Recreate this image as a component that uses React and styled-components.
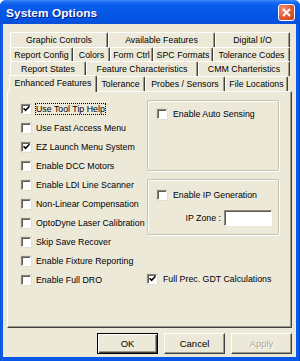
import React from "react";
import styled, { createGlobalStyle } from "styled-components";

const Global = createGlobalStyle`
  html, body {
    margin: 0;
    padding: 0;
    background: #ffffff;
  }
  * {
    box-sizing: border-box;
  }
`;

const FACE = "#ECE9D8";

const Window = styled.div`
  width: 300px;
  height: 361px;
  display: flex;
  flex-direction: column;
  background: linear-gradient(to right, #0842C8 0, #1763F0 1px, #0856E8 3px, #0856E8 296px, #1461F0 298px, #0036B6 300px);
  border-radius: 6px 6px 0 0;
  font-family: "Liberation Sans", Arial, sans-serif;
  font-size: 8.8px;
  color: #000;
  overflow: hidden;
`;

const TitleBar = styled.div`
  height: 24px;
  flex: none;
  display: flex;
  align-items: center;
  justify-content: space-between;
  padding: 1px 5px 0 6px;
  background: linear-gradient(
    to bottom,
    #3B8CF8 0,
    #1E6FF5 2px,
    #0A5EEE 5px,
    #0456E7 12px,
    #0353E2 20px,
    #0A4FD6 24px
  );
`;

const Title = styled.span`
  font-family: "Liberation Sans", Arial, sans-serif;
  font-weight: bold;
  font-size: 11.8px;
  color: #fff;
  text-shadow: 1px 1px 0 #0A1C8C;
  letter-spacing: 0.1px;
`;

const CloseButton = styled.div`
  width: 17px;
  height: 17px;
  border: 1px solid #fff;
  border-radius: 3px;
  background: radial-gradient(circle at 30% 30%, #F2937A 0, #E2603F 45%, #C63E1A 100%);
  display: flex;
  align-items: center;
  justify-content: center;
`;

const Body = styled.div`
  flex: 1;
  margin: 0 4px 4px 3px;
  background: ${FACE};
  padding: 8px 4px 0 4px;
  display: flex;
  flex-direction: column;
`;

const Tabs = styled.div`
  margin-left: 3px;
  width: 280px;
  display: flex;
  flex-direction: column;
`;

const TabRow = styled.div`
  display: flex;
  height: ${(p) => p.$h}px;
  position: relative;
  z-index: ${(p) => (p.$front ? 2 : 1)};
`;

const Tab = styled.div`
  width: ${(p) => p.$w}px;
  height: ${(p) => (p.$active ? p.$h + 2 : p.$h)}px;
  margin-top: ${(p) => (p.$active ? -1 : 0)}px;
  margin-left: ${(p) => (p.$active ? -1 : 0)}px;
  margin-right: ${(p) => (p.$active ? -1 : 0)}px;
  background: ${FACE};
  border-top: 1px solid #fff;
  border-left: 1px solid #fff;
  border-right: 1px solid #404040;
  box-shadow: inset -1px 0 0 #9D9A8A;
  border-radius: 2px 2px 0 0;
  display: flex;
  align-items: center;
  justify-content: center;
  white-space: nowrap;
  padding-bottom: ${(p) => (p.$active ? 2 : 0)}px;
  position: relative;
  z-index: ${(p) => (p.$active ? 3 : 1)};
`;

const Panel = styled.div`
  width: 285px;
  height: 237px;
  border-top: 1px solid #fff;
  border-left: 1px solid #fff;
  border-right: 1px solid #404040;
  border-bottom: 1px solid #404040;
  box-shadow: inset -1px -1px 0 #9D9A8A;
  display: flex;
  padding: 7px 0 0 13px;
`;

const LeftColumn = styled.div`
  width: 126px;
  display: flex;
  flex-direction: column;
`;

const RightColumn = styled.div`
  width: 132px;
  padding-top: 1px;
  display: flex;
  flex-direction: column;
`;

const CheckRow = styled.div`
  height: 19px;
  display: flex;
  align-items: center;
  gap: ${(p) => p.$gap || 4}px;
  white-space: nowrap;
  margin-top: ${(p) => p.$mt || 0}px;
`;

const Box = styled.span`
  width: 10px;
  height: 10px;
  flex: none;
  background: #fff;
  border-top: 1px solid #8B887A;
  border-left: 1px solid #8B887A;
  border-bottom: 1px solid #fff;
  border-right: 1px solid #fff;
  box-shadow: inset 1px 1px 0 #5E5C52, 0 0 0 0.5px #D8D5C6;
  display: flex;
  align-items: center;
  justify-content: center;
`;

const Label = styled.span`
  padding: 1px 1px;
  outline: ${(p) => (p.$focus ? "1px dotted #000" : "none")};
  outline-offset: -1px;
`;

const Group = styled.div`
  height: ${(p) => p.$h}px;
  margin-bottom: ${(p) => p.$mb || 0}px;
  border: 1px solid #C5C2B2;
  box-shadow: inset 1px 1px 0 #fff, 1px 1px 0 #fff;
  border-radius: 2px;
  padding: ${(p) => p.$pt}px 6px 0 9px;
  display: flex;
  flex-direction: column;
`;

const FieldRow = styled.div`
  margin-top: 6px;
  display: flex;
  align-items: center;
  justify-content: flex-end;
  gap: 3px;
`;

const TextField = styled.div`
  width: 48px;
  height: 16px;
  background: #fff;
  border-top: 1px solid #8B887A;
  border-left: 1px solid #8B887A;
  border-bottom: 1px solid #fff;
  border-right: 1px solid #fff;
  box-shadow: inset 1px 1px 0 #5E5C52;
`;

const ButtonBar = styled.div`
  margin-top: 5px;
  display: flex;
  justify-content: flex-end;
  gap: 6px;
`;

const Button = styled.div`
  width: 61px;
  height: 21px;
  display: flex;
  align-items: center;
  justify-content: center;
  font-size: 9.5px;
  background: ${FACE};
  border: 1px solid ${(p) => (p.$default ? "#000" : "#fff")};
  border-right-color: ${(p) => (p.$default ? "#000" : "#404040")};
  border-bottom-color: ${(p) => (p.$default ? "#000" : "#404040")};
  box-shadow: ${(p) =>
    p.$default
      ? "inset 1px 1px 0 #fff, inset -1px -1px 0 #404040, inset -2px -2px 0 #9D9A8A"
      : "inset -1px -1px 0 #9D9A8A"};
  color: ${(p) => (p.$disabled ? "#ACA899" : "#000")};
  text-shadow: ${(p) => (p.$disabled ? "1px 1px 0 #fff" : "none")};
`;

const tabRows = [
  {
    h: 15,
    tabs: [
      ["Graphic Controls", 98],
      ["Available Features", 107],
      ["Digital I/O", 75],
    ],
  },
  {
    h: 14,
    tabs: [
      ["Report Config", 63],
      ["Colors", 37],
      ["Form Ctrl", 43],
      ["SPC Formats", 60],
      ["Tolerance Codes", 77],
    ],
  },
  {
    h: 15,
    tabs: [
      ["Report States", 76],
      ["Feature Characteristics", 112],
      ["CMM Charteristics", 92],
    ],
  },
  {
    h: 15,
    tabs: [
      ["Enhanced Features", 88, true],
      ["Tolerance", 49],
      ["Probes / Sensors", 80],
      ["File Locations", 63],
    ],
  },
];

const leftOptions = [
  ["Use Tool Tip Help", true, true],
  ["Use Fast Access Menu", false],
  ["EZ Launch Menu System", true],
  ["Enable DCC Motors", false],
  ["Enable LDI Line Scanner", false],
  ["Non-Linear Compensation", false],
  ["OptoDyne Laser Calibration", false],
  ["Skip Save Recover", false],
  ["Enable Fixture Reporting", false],
  ["Enable Full DRO", false],
];

const Tick = () => (
  <svg width="7" height="7" viewBox="0 0 7 7">
    <path d="M0.5 3.2 L2.6 5.3 L6.5 1.2" stroke="#000" strokeWidth="1.6" fill="none" />
  </svg>
);

const Checkbox = ({ label, checked, focus, gap, mt }) => (
  <CheckRow $gap={gap} $mt={mt}>
    <Box>{checked && <Tick />}</Box>
    <Label $focus={focus}>{label}</Label>
  </CheckRow>
);

export default function App() {
  return (
    <>
      <Global />
      <Window>
        <TitleBar>
          <Title>System Options</Title>
          <CloseButton>
            <svg width="9" height="9" viewBox="0 0 9 9">
              <path d="M1 1 L8 8 M8 1 L1 8" stroke="#fff" strokeWidth="1.8" />
            </svg>
          </CloseButton>
        </TitleBar>
        <Body>
          <Tabs>
            {tabRows.map((row, i) => (
              <TabRow key={i} $h={row.h} $front={i === tabRows.length - 1}>
                {row.tabs.map(([name, w, active]) => (
                  <Tab key={name} $w={w} $h={row.h} $active={active}>
                    {name}
                  </Tab>
                ))}
              </TabRow>
            ))}
          </Tabs>
          <Panel>
            <LeftColumn>
              {leftOptions.map(([label, checked, focus]) => (
                <Checkbox key={label} label={label} checked={checked} focus={focus} />
              ))}
            </LeftColumn>
            <RightColumn>
              <Group $h={71} $mb={8} $pt={3}>
                <Checkbox label="Enable Auto Sensing" checked={false} gap={5} />
              </Group>
              <Group $h={56} $pt={5}>
                <Checkbox label="Enable IP Generation" checked={false} gap={5} />
                <FieldRow>
                  <span>IP Zone :</span>
                  <TextField />
                </FieldRow>
              </Group>
              <Checkbox label="Full Prec. GDT Calculations" checked gap={5} mt={34} />
            </RightColumn>
          </Panel>
          <ButtonBar>
            <Button $default>OK</Button>
            <Button>Cancel</Button>
            <Button $disabled>Apply</Button>
          </ButtonBar>
        </Body>
      </Window>
    </>
  );
}
